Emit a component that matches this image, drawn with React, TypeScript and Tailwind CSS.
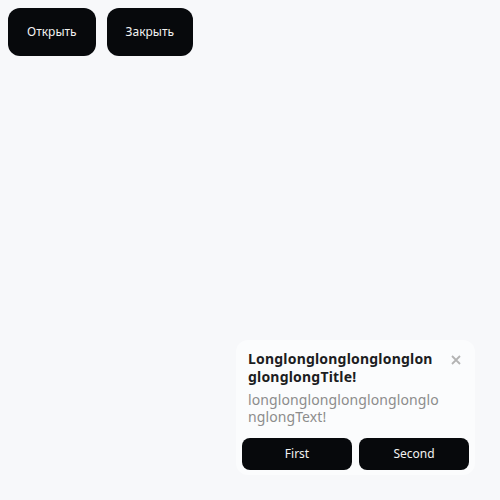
import * as React from "react";

export default function App() {
  const [open, setOpen] = React.useState(true);

  return (
    <div className="min-h-screen bg-[#f7f8fa] font-['Noto_Sans',sans-serif]">
      <div className="flex gap-[11px] p-2">
        <button
          onClick={() => setOpen(true)}
          className="h-12 rounded-xl bg-[#07090c] px-[19px] text-xs text-[#f2f2f2]"
        >
          Открыть
        </button>
        <button
          onClick={() => setOpen(false)}
          className="h-12 rounded-xl bg-[#07090c] px-[19px] text-xs text-[#f2f2f2]"
        >
          Закрыть
        </button>
      </div>

      {open && (
        <div className="fixed right-[25px] bottom-[25px] w-[239px] rounded-xl bg-[#fbfcfd] px-1.5 pt-1.5 pb-[5px]">
          <div className="flex items-start px-1.5 pt-1">
            <div className="w-[191px] break-all">
              <div className="text-sm leading-[18px] font-bold tracking-[0.2px] text-[#1c1d1f]">
                LonglonglonglonglonglonglonglongTitle!
              </div>
              <div className="mt-[5px] text-sm leading-[17px] tracking-[0.1px] text-[#8c8c8c]">
                longlonglonglonglonglonglonglongText!
              </div>
            </div>
            <button
              onClick={() => setOpen(false)}
              className="mt-[5px] mr-[2px] ml-auto flex h-[10px] w-[10px] items-center justify-center text-[#b3b3b3]"
            >
              <svg width="10" height="10" viewBox="0 0 10 10" fill="none">
                <path d="M1 1L9 9M9 1L1 9" stroke="currentColor" strokeWidth="1.8" />
              </svg>
            </button>
          </div>
          <div className="mt-[13px] flex gap-[7px]">
            <button className="h-8 flex-1 rounded-lg bg-[#07090c] text-xs text-[#f2f2f2]">
              First
            </button>
            <button className="h-8 flex-1 rounded-lg bg-[#07090c] text-xs text-[#f2f2f2]">
              Second
            </button>
          </div>
        </div>
      )}
    </div>
  );
}
